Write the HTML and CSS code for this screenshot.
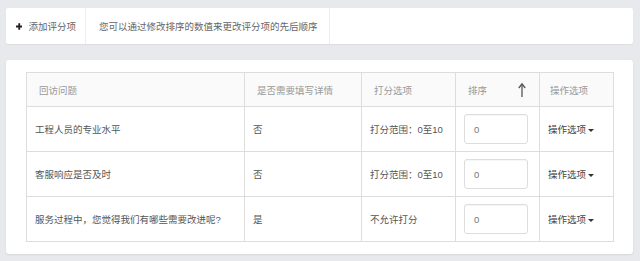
FILE: index.html
```html
<!DOCTYPE html>
<html lang="zh">
<head>
  <meta charset="UTF-8" />
  <title>评分项设置</title>
  <link rel="stylesheet" href="styles.css">
</head>
<body>
  <div class="toolbar">
    <a href="#" class="add-btn">
      <svg class="plus" width="7" height="7" viewBox="0 0 7 7"><path d="M3.5 0v7M0 3.5h7" stroke="#222" stroke-width="2"/></svg>
      添加评分项
    </a>
    <div class="tip">您可以通过修改排序的数值来更改评分项的先后顺序</div>
  </div>

  <div class="card">
    <table class="score-table">
      <thead>
        <tr>
          <th class="col-q">回访问题</th>
          <th class="col-detail">是否需要填写详情</th>
          <th class="col-score">打分选项</th>
          <th class="col-sort">
            <div class="sort-head">
              <span>排序</span>
              <svg class="sort-arrow" width="8" height="14" viewBox="0 0 8 14"><path d="M4 1.5V14" stroke="#555" stroke-width="1.3"/><path d="M0.8 5L4 0.8 7.2 5" fill="none" stroke="#555" stroke-width="1.3"/></svg>
            </div>
          </th>
          <th class="col-op">操作选项</th>
        </tr>
      </thead>
      <tbody>
        <tr>
          <td>工程人员的专业水平</td>
          <td>否</td>
          <td>打分范围：0至10</td>
          <td><input type="text" class="sort-input" value="0" /></td>
          <td><span class="op">操作选项<span class="caret"></span></span></td>
        </tr>
        <tr>
          <td>客服响应是否及时</td>
          <td>否</td>
          <td>打分范围：0至10</td>
          <td><input type="text" class="sort-input" value="0" /></td>
          <td><span class="op">操作选项<span class="caret"></span></span></td>
        </tr>
        <tr>
          <td>服务过程中，您觉得我们有哪些需要改进呢?</td>
          <td>是</td>
          <td>不允许打分</td>
          <td><input type="text" class="sort-input" value="0" /></td>
          <td><span class="op">操作选项<span class="caret"></span></span></td>
        </tr>
      </tbody>
    </table>
  </div>
</body>
</html>
```

FILE: styles.css
```css
* {
  margin: 0;
  padding: 0;
  box-sizing: border-box;
}

body {
  background-color: #e8e9ec;
  font-family: "Liberation Sans", "Noto Sans CJK SC", sans-serif;
  font-size: 9.5px;
  color: #555;
  padding: 8px 7px 6px 6px;
}

/* Toolbar */
.toolbar {
  display: flex;
  height: 36px;
  background-color: #fff;
  border-radius: 2px;
  box-shadow: 0 1px 1px rgba(0, 0, 0, 0.05);
  margin-bottom: 16px;
}

.add-btn {
  display: flex;
  align-items: center;
  padding: 0 9px 0 10px;
  width: 80px;
  border-right: 1px solid #eee;
  color: #666;
  text-decoration: none;
  white-space: nowrap;
}

.plus {
  margin-right: 6px;
}

.tip {
  display: flex;
  align-items: center;
  padding: 0 11px 0 13px;
  border-right: 1px solid #eee;
  color: #666;
  white-space: nowrap;
}

/* Card & table */
.card {
  background-color: #fff;
  border-radius: 3px;
  padding: 12px 20px;
  box-shadow: 0 1px 2px rgba(0, 0, 0, 0.08);
}

.score-table {
  width: 100%;
  border-collapse: collapse;
  table-layout: fixed;
}

.score-table th,
.score-table td {
  border: 1px solid #ddd;
  text-align: left;
  vertical-align: middle;
}

.score-table th {
  height: 34px;
  background-color: #fafafa;
  font-weight: normal;
  color: #999;
  padding: 0 12px;
}

.score-table td {
  height: 45px;
  padding: 0 8px;
  color: #555;
}

.col-q { width: 218px; }
.col-detail { width: 117px; }
.col-score { width: 94px; }
.col-sort { width: 84px; }
.col-op { width: 74px; }

.score-table th.col-op {
  padding-left: 10px;
}

.sort-head {
  display: flex;
  align-items: center;
  justify-content: space-between;
}

.sort-arrow {
  margin-right: 1px;
}

.sort-input {
  width: 64px;
  height: 30px;
  border: 1px solid #ddd;
  border-radius: 3px;
  padding: 0 9px;
  font-family: inherit;
  font-size: 9.5px;
  color: #777;
  box-shadow: inset 0 1px 1px rgba(0, 0, 0, 0.04);
}

.op {
  color: #444;
  white-space: nowrap;
}

.caret {
  display: inline-block;
  width: 0;
  height: 0;
  margin-left: 2px;
  vertical-align: middle;
  border-top: 3px solid #333;
  border-left: 3px solid transparent;
  border-right: 3px solid transparent;
}
```
